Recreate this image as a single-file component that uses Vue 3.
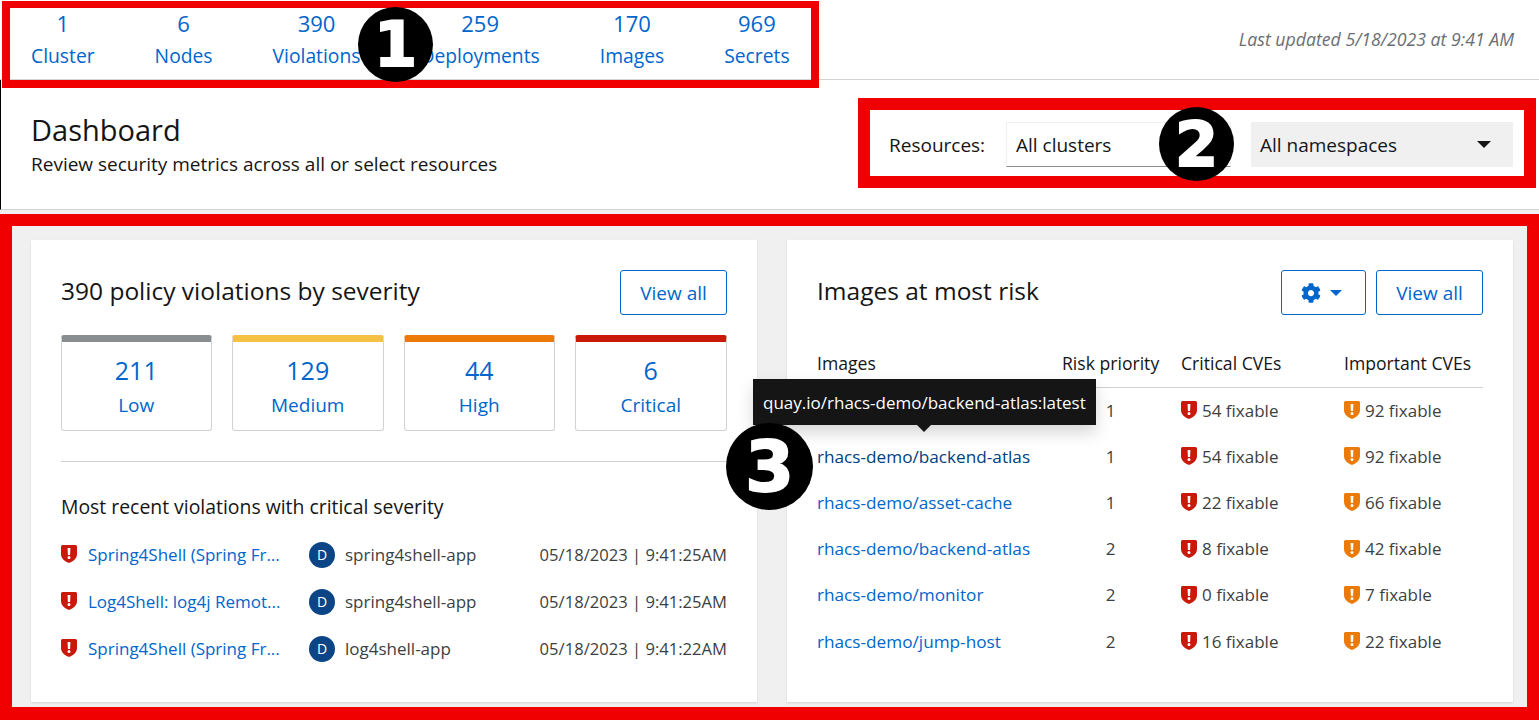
<script setup>
const counts = [
  { value: 1, label: 'Cluster' },
  { value: 6, label: 'Nodes' },
  { value: 390, label: 'Violations' },
  { value: 259, label: 'Deployments' },
  { value: 170, label: 'Images' },
  { value: 969, label: 'Secrets' },
]

const severities = [
  { value: 211, label: 'Low', color: '#8a8d90' },
  { value: 129, label: 'Medium', color: '#f4c145' },
  { value: 44, label: 'High', color: '#ec7a08' },
  { value: 6, label: 'Critical', color: '#c9190b' },
]

const violations = [
  { name: 'Spring4Shell (Spring Fr...', app: 'spring4shell-app', time: '05/18/2023 | 9:41:25AM' },
  { name: 'Log4Shell: log4j Remot...', app: 'spring4shell-app', time: '05/18/2023 | 9:41:25AM' },
  { name: 'Spring4Shell (Spring Fr...', app: 'log4shell-app', time: '05/18/2023 | 9:41:22AM' },
]

const images = [
  { name: 'rhacs-demo/backend-atlas', risk: 1, critical: 54, important: 92 },
  { name: 'rhacs-demo/backend-atlas', risk: 1, critical: 54, important: 92, hover: true },
  { name: 'rhacs-demo/asset-cache', risk: 1, critical: 22, important: 66 },
  { name: 'rhacs-demo/backend-atlas', risk: 2, critical: 8, important: 42 },
  { name: 'rhacs-demo/monitor', risk: 2, critical: 0, important: 7 },
  { name: 'rhacs-demo/jump-host', risk: 2, critical: 16, important: 22 },
]

const shieldPath = 'M1.5 0h13A1.5 1.5 0 0 1 16 1.5V9c0 4.2-3.4 7.4-8 9-4.6-1.6-8-4.8-8-9V1.5A1.5 1.5 0 0 1 1.5 0zM6.6 3l.3 7h2.2l.3-7zM8 11a1.5 1.5 0 1 0 0 3 1.5 1.5 0 0 0 0-3z'
const cogPath = 'M487.4 315.7l-42.6-24.6c4.3-23.2 4.3-47 0-70.2l42.6-24.6c4.9-2.8 7.1-8.6 5.5-14-11.1-35.6-30-67.8-54.7-94.6-3.8-4.1-10-5.1-14.8-2.3L380.8 110c-17.9-15.4-38.5-27.3-60.8-35.1V25.8c0-5.6-3.9-10.5-9.4-11.7-36.7-8.2-74.3-7.8-109.2 0-5.5 1.2-9.4 6.1-9.4 11.7V75c-22.2 7.9-42.8 19.8-60.8 35.1L88.7 85.5c-4.9-2.8-11-1.9-14.8 2.3-24.7 26.7-43.6 58.9-54.7 94.6-1.7 5.4.6 11.2 5.5 14L67.3 221c-4.3 23.2-4.3 47 0 70.2l-42.6 24.6c-4.9 2.8-7.1 8.6-5.5 14 11.1 35.6 30 67.8 54.7 94.6 3.8 4.1 10 5.1 14.8 2.3l42.6-24.6c17.9 15.4 38.5 27.3 60.8 35.1v49.2c0 5.6 3.9 10.5 9.4 11.7 36.7 8.2 74.3 7.8 109.2 0 5.5-1.2 9.4-6.1 9.4-11.7v-49.2c22.2-7.9 42.8-19.8 60.8-35.1l42.6 24.6c4.9 2.8 11 1.9 14.8-2.3 24.7-26.7 43.6-58.9 54.7-94.6 1.5-5.5-.7-11.3-5.6-14.1zM256 336c-44.1 0-80-35.9-80-80s35.9-80 80-80 80 35.9 80 80-35.9 80-80 80z'
</script>

<template>
  <div class="page">
    <header class="summary">
      <a v-for="item in counts" :key="item.label" class="count">
        <span class="count-value">{{ item.value }}</span>
        <span>{{ item.label }}</span>
      </a>
      <span class="updated">Last updated 5/18/2023 at 9:41 AM</span>
    </header>

    <section class="title-bar">
      <div>
        <h1>Dashboard</h1>
        <p>Review security metrics across all or select resources</p>
      </div>
      <div class="filters">
        <span class="filter-label">Resources:</span>
        <div class="select clusters">All clusters</div>
        <div class="select namespaces">
          All namespaces
          <span class="select-caret"></span>
        </div>
      </div>
    </section>

    <main class="content">
      <section class="card">
        <div class="card-head">
          <h2>390 policy violations by severity</h2>
          <button class="outline">View all</button>
        </div>
        <div class="severities">
          <a v-for="s in severities" :key="s.label" class="severity" :style="{ borderTopColor: s.color }">
            <span class="severity-value">{{ s.value }}</span>
            <span>{{ s.label }}</span>
          </a>
        </div>
        <hr class="divider" />
        <h3>Most recent violations with critical severity</h3>
        <ul class="violations">
          <li v-for="(v, i) in violations" :key="i">
            <svg class="shield" viewBox="0 0 16 18" width="16" height="18">
              <path fill="#c9190b" fill-rule="evenodd" :d="shieldPath" />
            </svg>
            <a class="violation-name">{{ v.name }}</a>
            <span class="avatar">D</span>
            <span class="app">{{ v.app }}</span>
            <span class="time">{{ v.time }}</span>
          </li>
        </ul>
      </section>

      <section class="card">
        <div class="card-head">
          <h2>Images at most risk</h2>
          <div class="actions">
            <button class="outline options">
              <svg viewBox="0 0 512 512" width="20" height="20">
                <path fill="#06c" :d="cogPath" />
              </svg>
              <span class="blue-caret"></span>
            </button>
            <button class="outline">View all</button>
          </div>
        </div>
        <table class="risk">
          <thead>
            <tr>
              <th class="col-image">Images</th>
              <th class="col-risk">Risk priority</th>
              <th class="col-critical">Critical CVEs</th>
              <th>Important CVEs</th>
            </tr>
          </thead>
          <tbody>
            <tr v-for="(img, i) in images" :key="i">
              <td><a class="image-link" :class="{ hover: img.hover }">{{ img.name }}</a></td>
              <td class="risk-value">{{ img.risk }}</td>
              <td>
                <span class="cve">
                  <svg viewBox="0 0 16 18" width="16" height="18">
                    <path fill="#c9190b" fill-rule="evenodd" :d="shieldPath" />
                  </svg>
                  {{ img.critical }} fixable
                </span>
              </td>
              <td>
                <span class="cve">
                  <svg viewBox="0 0 16 18" width="16" height="18">
                    <path fill="#ec7a08" fill-rule="evenodd" :d="shieldPath" />
                  </svg>
                  {{ img.important }} fixable
                </span>
              </td>
            </tr>
          </tbody>
        </table>
      </section>
    </main>

    <div class="tooltip">quay.io/rhacs-demo/backend-atlas:latest</div>

    <div class="callout box-one"></div>
    <div class="callout box-two"></div>
    <div class="callout box-three"></div>
    <div class="badge badge-one">1</div>
    <div class="badge badge-two">2</div>
    <div class="badge badge-three">3</div>
  </div>
</template>

<style>
body {
  margin: 0;
}
</style>

<style scoped>
.page {
  position: relative;
  width: 1539px;
  height: 720px;
  overflow: hidden;
  background: #fff;
  color: #151515;
  font-family: 'Open Sans', 'Noto Sans', sans-serif;
  font-size: 17px;
}

a {
  color: #06c;
}

.summary {
  display: flex;
  align-items: center;
  gap: 60px;
  height: 79px;
  padding: 0 25px 0 31px;
  border-bottom: 1px solid #d2d2d2;
}

.count {
  display: flex;
  flex-direction: column;
  align-items: center;
  gap: 9px;
  font-size: 19.3px;
  line-height: 24px;
}

.count-value {
  font-size: 22px;
}

.updated {
  margin-left: auto;
  margin-top: -2px;
  color: #6a6e73;
  font-style: italic;
  font-size: 17.7px;
}

.title-bar {
  display: flex;
  justify-content: space-between;
  align-items: center;
  height: 129px;
  padding: 0 26px 0 30px;
  border-left: 1px solid #000;
  border-bottom: 1px solid #d2d2d2;
  box-sizing: content-box;
}

.title-bar > div:first-child {
  margin-top: -2px;
}

h1 {
  margin: 0 0 4px;
  font-size: 29px;
  line-height: 36px;
  font-weight: 400;
}

.title-bar p {
  margin: 0;
  font-size: 19px;
  line-height: 24px;
}

.filters {
  display: flex;
  align-items: center;
  font-size: 19px;
}

.filter-label {
  width: 117px;
}

.select {
  display: flex;
  align-items: center;
  justify-content: space-between;
  box-sizing: border-box;
  height: 45px;
  padding: 0 9px;
}

.clusters {
  width: 225px;
  margin-right: 20px;
  border: 1px solid #f0f0f0;
  border-bottom-color: #8a8d90;
}

.namespaces {
  width: 262px;
  padding-right: 22px;
  background: #f0f0f0;
}

.select-caret {
  border-left: 7px solid transparent;
  border-right: 7px solid transparent;
  border-top: 7px solid #151515;
}

.content {
  display: grid;
  grid-template-columns: 726px 726px;
  gap: 30px;
  height: 510px;
  padding: 30px 26px 0 31px;
  background: #f0f0f0;
}

.card {
  box-sizing: border-box;
  height: 462px;
  padding: 30px;
  background: #fff;
  box-shadow: 0 1px 2px rgba(3, 3, 3, 0.12);
}

.card-head {
  display: flex;
  align-items: center;
  justify-content: space-between;
  height: 45px;
}

h2 {
  margin: -4px 0 0;
  font-size: 24.5px;
  font-weight: 400;
}

.outline {
  box-sizing: border-box;
  width: 107px;
  height: 45px;
  border: 1px solid #06c;
  border-radius: 3px;
  background: #fff;
  color: #06c;
  font: inherit;
  font-size: 19px;
}

.actions {
  display: flex;
  gap: 10px;
}

.options {
  display: flex;
  align-items: center;
  justify-content: center;
  gap: 9px;
  width: 85px;
  padding: 0 4px 0 0;
}

.blue-caret {
  border-left: 6px solid transparent;
  border-right: 6px solid transparent;
  border-top: 6px solid #06c;
}

.severities {
  display: grid;
  grid-template-columns: repeat(4, 1fr);
  gap: 20px;
  margin: 20px 0.5px 0 -0.5px;
}

.severity {
  display: flex;
  flex-direction: column;
  align-items: center;
  justify-content: center;
  gap: 8px;
  box-sizing: border-box;
  height: 96px;
  border: 1px solid #d2d2d2;
  border-top: 7px solid;
  border-radius: 3px;
  font-size: 19px;
  line-height: 24px;
}

.severity-value {
  font-size: 25px;
  line-height: 30px;
}

.divider {
  margin: 30px 0 0;
  border: 0;
  border-top: 1px solid #d2d2d2;
}

h3 {
  margin: 31px 0 0;
  font-size: 19.4px;
  line-height: 27px;
  font-weight: 500;
}

.violations {
  margin: 11px 0 0;
  padding: 0;
  list-style: none;
}

.violations li {
  display: flex;
  align-items: center;
  height: 47px;
}

.shield {
  margin-top: -2px;
  flex: none;
}

.violation-name {
  width: 194px;
  margin: 0 27px 0 11px;
  white-space: nowrap;
}

.avatar {
  display: flex;
  align-items: center;
  justify-content: center;
  flex: none;
  width: 26px;
  height: 26px;
  margin-right: 10px;
  border-radius: 50%;
  background: #0b4586;
  color: #fff;
  font-size: 14px;
}

.app {
  color: #3c3f42;
}

.time {
  margin-left: auto;
  color: #3c3f42;
  font-size: 16.6px;
}

.risk {
  width: 666px;
  margin-top: 23px;
  border-collapse: collapse;
  table-layout: fixed;
}

.risk th {
  height: 49px;
  padding: 0;
  border-bottom: 1px solid #d2d2d2;
  text-align: left;
  font-size: 17.6px;
  font-weight: 500;
  white-space: nowrap;
}

.col-image {
  width: 245px;
}

.col-risk {
  width: 119px;
}

.col-critical {
  width: 163px;
}

.risk td {
  box-sizing: border-box;
  height: 46.2px;
  padding: 0 0 1px;
  color: #3c3f42;
}

.risk .risk-value {
  padding-right: 22px;
  text-align: center;
}

.image-link {
  font-size: 17.2px;
}

.image-link.hover {
  color: #004080;
}

.cve {
  display: flex;
  align-items: center;
  gap: 5px;
}

.tooltip {
  position: absolute;
  left: 753px;
  top: 379px;
  display: flex;
  align-items: center;
  box-sizing: border-box;
  width: 343px;
  height: 46px;
  padding: 0 10px;
  background: #151515;
  color: #fff;
  font-size: 17px;
  white-space: nowrap;
  box-shadow: 0 8px 16px rgba(3, 3, 3, 0.16);
}

.tooltip::after {
  content: '';
  position: absolute;
  left: 164px;
  top: 46px;
  border-left: 7px solid transparent;
  border-right: 7px solid transparent;
  border-top: 7px solid #151515;
}

.callout {
  position: absolute;
  box-sizing: border-box;
  border: solid #f00000;
}

.box-one {
  left: 2px;
  top: 1px;
  width: 817px;
  height: 87px;
  border-width: 7px 8px 8px;
}

.box-two {
  left: 858px;
  top: 98px;
  width: 678px;
  height: 90px;
  border-width: 12px;
}

.box-three {
  left: 0;
  top: 214px;
  width: 1539px;
  height: 506px;
  border-width: 12px 12px 13px;
}

.badge {
  position: absolute;
  display: flex;
  align-items: center;
  justify-content: center;
  border-radius: 50%;
  background: #000;
  color: #fff;
  font-family: 'DejaVu Sans', sans-serif;
  font-weight: 700;
  -webkit-text-stroke: 2px #fff;
}

.badge-one {
  left: 358px;
  top: 7px;
  width: 75px;
  height: 75px;
  font-size: 62px;
}

.badge-two {
  left: 1159px;
  top: 107px;
  width: 75px;
  height: 74px;
  font-size: 62px;
}

.badge-three {
  left: 726px;
  top: 423px;
  width: 87px;
  height: 87px;
  font-size: 70px;
}
</style>
